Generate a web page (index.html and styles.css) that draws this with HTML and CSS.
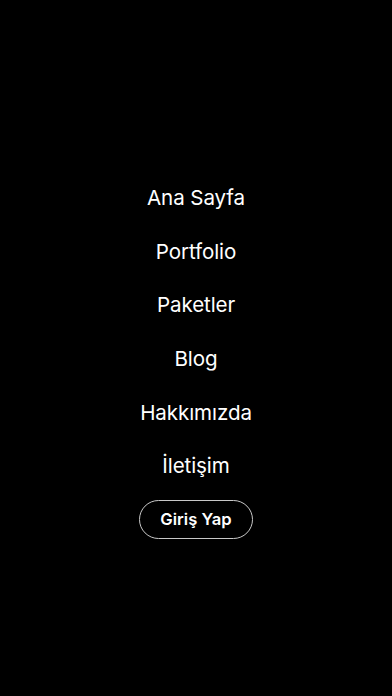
FILE: index.html
```html
<!DOCTYPE html>
<html lang="tr">
<head>
<meta charset="utf-8">
<meta name="viewport" content="width=device-width, initial-scale=1">
<link rel="stylesheet" href="styles.css">
</head>
<body>
<nav class="menu">
  <a class="menu-item" href="#">Ana Sayfa</a>
  <a class="menu-item" href="#">Portfolio</a>
  <a class="menu-item" href="#">Paketler</a>
  <a class="menu-item" href="#">Blog</a>
  <a class="menu-item" href="#">Hakkımızda</a>
  <a class="menu-item" href="#">İletişim</a>
  <div class="menu-action">
    <a class="login-btn" href="#">Giriş Yap</a>
  </div>
</nav>
</body>
</html>
```
FILE: styles.css
```css
html, body {
  margin: 0;
  padding: 0;
  background: #000;
  height: 100%;
}
body {
  font-family: Inter, "Noto Sans", "Liberation Sans", sans-serif;
  color: #fff;
}
.menu {
  display: flex;
  flex-direction: column;
  align-items: center;
  padding-top: 171px;
}
.menu-item {
  display: flex;
  align-items: center;
  justify-content: center;
  height: 53.6px;
  font-size: 20.6px;
  color: #fff;
  text-decoration: none;
  letter-spacing: -0.1px;
}
.menu-action {
  display: flex;
  align-items: center;
  justify-content: center;
  height: 53.6px;
}
.login-btn {
  display: flex;
  align-items: center;
  justify-content: center;
  width: 112px;
  height: 37px;
  border: 1px solid #c8c8c8;
  border-radius: 20px;
  color: #fff;
  text-decoration: none;
  font-size: 16.6px;
  font-weight: 600;
}
```
